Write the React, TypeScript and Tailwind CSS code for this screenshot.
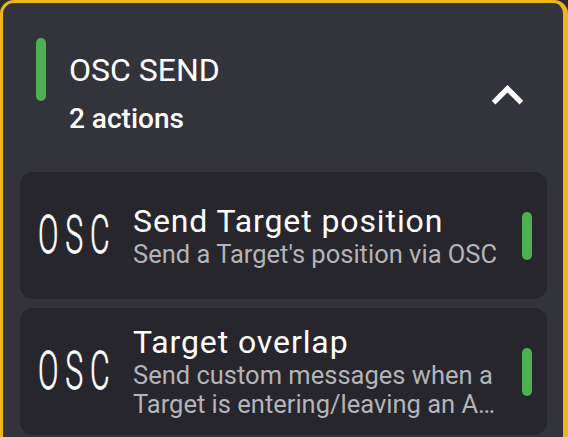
const actions = [
  {
    title: "Send Target position",
    lines: ["Send a Target's position via OSC"],
  },
  {
    title: "Target overlap",
    lines: [
      "Send custom messages when a",
      "Target is entering/leaving an Area of interest",
    ],
  },
];

function ExpandLess() {
  return (
    <svg viewBox="0 0 24 24" className="w-[63px] h-[63px] fill-white">
      <path d="M12 8l-6 6 1.41 1.41L12 10.83l4.59 4.58L18 14z" />
    </svg>
  );
}

function ActionCard({ title, lines }: { title: string; lines: string[] }) {
  return (
    <div className="flex items-center h-[127px] rounded-[13px] bg-[#26262c] pl-[18px] pr-[15px]">
      <div className="w-[95px] shrink-0 overflow-visible">
        <span className="inline-block origin-left scale-x-[0.57] text-[53px] leading-none font-light tracking-[12px] text-white [-webkit-text-stroke:0.6px_white]">
          OSC
        </span>
      </div>
      <div className="flex-1 min-w-0 pr-[22px]">
        <div className="text-[32px] leading-[37px] tracking-[0.9px] text-white">
          {title}
        </div>
        {lines.map((l) => (
          <div
            key={l}
            className="text-[25.5px] leading-[29px] text-[#b3b3b8] truncate"
          >
            {l}
          </div>
        ))}
      </div>
      <div className="w-[10px] h-[48px] rounded-full bg-[#4caf50] shrink-0" />
    </div>
  );
}

export default function App() {
  return (
    <div
      className="h-[437px] overflow-hidden bg-[#2b2b31]"
      style={{ fontFamily: "Roboto, 'Noto Sans', sans-serif" }}
    >
      <div className="min-h-[480px] rounded-[14px] border-[3px] border-[#f0b614] border-r-[5px] bg-[#33333b]">
        <div className="flex items-start pl-[33px] pr-[24px] pt-[35px] h-[169px]">
          <div className="w-[10px] h-[63px] rounded-full bg-[#4caf50]" />
          <div className="flex-1 pl-[23px] pt-[14px]">
            <div className="text-[32px] leading-[37px] text-white">OSC SEND</div>
            <div className="mt-[14px] text-[28px] leading-[32px] font-medium text-white">
              2 actions
            </div>
          </div>
          <div className="mt-[26px]">
            <ExpandLess />
          </div>
        </div>
        <div className="flex flex-col gap-[9px] pl-[17px] pr-[16px]">
          {actions.map((a) => (
            <ActionCard key={a.title} title={a.title} lines={a.lines} />
          ))}
        </div>
      </div>
    </div>
  );
}
